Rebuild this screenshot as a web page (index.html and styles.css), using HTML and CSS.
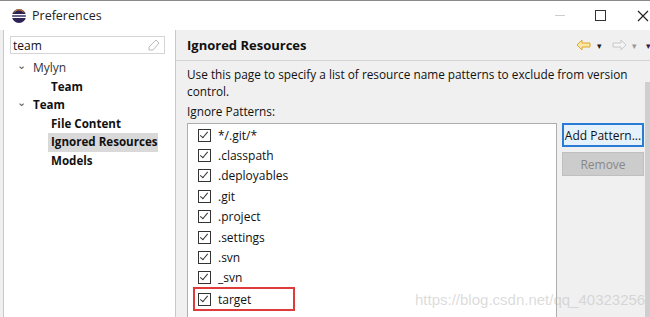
FILE: index.html
```html
<!DOCTYPE html>
<html lang="en">
<head>
  <meta charset="UTF-8">
  <title>Preferences</title>
  <link rel="stylesheet" href="styles.css">
</head>
<body>
  <div class="window">

    <!-- title bar -->
    <div class="titlebar">
      <svg class="app-icon" width="16" height="16" viewBox="0 0 16 16">
        <circle cx="8" cy="8" r="7" fill="#2c2255"/>
        <rect x="1" y="6" width="14" height="1.3" fill="#fff"/>
        <rect x="1" y="8.7" width="14" height="1.3" fill="#fff"/>
        <path d="M3 4.5 A6 6 0 0 1 13 4.5" stroke="#f7941e" stroke-width="1" fill="none"/>
      </svg>
      <span class="title">Preferences</span>
      <div class="win-ctrls">
        <span class="ctrl min"></span>
        <span class="ctrl max"></span>
        <span class="ctrl close">
          <svg width="12" height="12" viewBox="0 0 12 12"><path d="M1 1 L11 11 M11 1 L1 11" stroke="#222" stroke-width="1.2"/></svg>
        </span>
      </div>
    </div>

    <div class="body">
      <!-- left tree -->
      <div class="sidebar">
        <div class="search">
          <span>team</span>
          <svg class="clear" width="12" height="12" viewBox="0 0 12 12"><path d="M8 1 L11 4 L5 11 L1 11 L1 8 Z" fill="none" stroke="#bbb"/></svg>
        </div>
        <ul class="tree">
          <li class="node"><span class="chev">&#8964;</span>Mylyn</li>
          <li class="leaf">Team</li>
          <li class="node bold"><span class="chev">&#8964;</span>Team</li>
          <li class="leaf">File Content</li>
          <li class="leaf selected">Ignored Resources</li>
          <li class="leaf">Models</li>
        </ul>
      </div>

      <!-- right page -->
      <div class="page">
        <div class="page-head">
          <h2>Ignored Resources</h2>
          <div class="nav-arrows">
            <svg width="16" height="12" viewBox="0 0 16 12"><path d="M1 6 L6 1 L6 4 L14 4 L14 8 L6 8 L6 11 Z" fill="#fbe7a3" stroke="#d9a72a"/></svg>
            <span class="drop">&#9662;</span>
            <svg width="16" height="12" viewBox="0 0 16 12"><path d="M15 6 L10 1 L10 4 L2 4 L2 8 L10 8 L10 11 Z" fill="#f4f4f4" stroke="#c8c8c8"/></svg>
            <span class="drop light">&#9662;</span>
            <span class="drop dark">&#9662;</span>
          </div>
        </div>
        <div class="page-body">
          <p class="desc">Use this page to specify a list of resource name patterns to exclude from version control.</p>
          <p class="label">Ignore Patterns:</p>
          <div class="patterns">
            <ul class="list">
              <li><span class="check"></span>*/.git/*</li>
              <li><span class="check"></span>.classpath</li>
              <li><span class="check"></span>.deployables</li>
              <li><span class="check"></span>.git</li>
              <li><span class="check"></span>.project</li>
              <li><span class="check"></span>.settings</li>
              <li><span class="check"></span>.svn</li>
              <li><span class="check"></span>_svn</li>
              <li class="marked"><span class="check"></span>target</li>
            </ul>
            <div class="buttons">
              <button class="btn primary">Add Pattern...</button>
              <button class="btn" disabled>Remove</button>
            </div>
          </div>
        </div>
        <div class="scroll-edge"></div>
      </div>
    </div>

    <div class="watermark">https://blog.csdn.net/qq_40323256</div>
  </div>
</body>
</html>
```

FILE: styles.css
```css
/* base */
html, body {
  margin: 0; padding: 0;
  overflow: hidden;
  font-family: 'Open Sans', 'Noto Sans', sans-serif;
  font-size: 11.8px;
  color: #111;
}
ul { list-style: none; margin: 0; padding: 0; }
p { margin: 0; }

.window {
  position: relative;
  width: 650px; height: 317px;
  border-top: 1px solid #8a8a8a;
  box-sizing: border-box;
  background: #f0f0f0;
  overflow: hidden;
}

/* title bar */
.titlebar {
  height: 29px; background: #fff;
  display: flex; align-items: center;
  padding-left: 11px;
}
.app-icon { margin-right: 5px; }
.title { font-size: 12.5px; color: #222; }
.win-ctrls { margin-left: auto; margin-right: -15px; display: flex; align-items: center; height: 100%; }
.ctrl { width: 41px; height: 100%; display: flex; align-items: center; justify-content: center; }
.ctrl.min::before { content: ""; width: 10px; height: 1px; background: #ccc; }
.ctrl.max::before { content: ""; width: 9px; height: 9px; border: 1px solid #333; }
.ctrl.close { width: 44px; }

/* body */
.body { display: flex; height: calc(100% - 29px); }

.sidebar {
  width: 173px; margin-left: 3px;
  background: #fff;
  border-left: 1px solid #c8c8c8;
  border-right: 1px solid #c8c8c8;
  padding: 6px 0 0 6px;
  box-sizing: border-box;
}
.search {
  width: 155px; height: 18px;
  border: 1px solid #d5d5d5;
  display: flex; align-items: center;
  padding: 0 4px 0 2px; box-sizing: border-box;
  font-size: 12px;
}
.clear { margin-left: auto; }
.tree { margin-top: 5px; }
.tree li { height: 18.6px; line-height: 18.6px; white-space: nowrap; font-size: 12px; }
.tree .node { padding-left: 7px; color: #333; }
.tree .node.bold { font-weight: bold; color: #111; font-size: 11.6px; }
.tree .chev {
  display: inline-block; width: 16px;
  font-size: 11px; color: #555; font-weight: normal;
  transform: translateY(-3px);
}
.tree .leaf { padding-left: 41px; font-weight: bold; font-size: 11.6px; }
.tree .leaf.selected {
  margin-left: 38px; padding-left: 3px;
  width: 107px; background: #d9d9d9;
}

/* right page */
.page { position: relative; flex: 1; }
.page-head {
  height: 30px;
  display: flex; align-items: center;
  padding-left: 11px;
  border-bottom: 1px solid #d4d4d4;
}
.page-head h2 { margin: 0; font-size: 13px; font-weight: bold; }
.nav-arrows { margin-left: auto; display: flex; align-items: center; gap: 5px; margin-right: -1px; }
.drop { font-size: 9px; color: #222; margin-right: 4px; }
.drop.light { color: #999; }
.drop.dark { color: #2c2255; margin-right: 0; }

.page-body { padding: 5px 0 0 11px; }
.desc { width: 455px; line-height: 17px; }
.label { margin-top: 3px; line-height: 17px; }

.patterns { display: flex; margin-top: 3px; }
.list {
  width: 370px; height: 200px;
  background: #fff;
  border: 1px solid #adadad;
  padding: 1px 0 0 6px;
  box-sizing: border-box;
}
.list li { height: 20.4px; display: flex; align-items: center; font-size: 12px; }
.check {
  width: 11px; height: 11px;
  border: 1px solid #333;
  margin: 0 7px 0 4px;
  position: relative;
}
.check::after {
  content: ""; position: absolute;
  left: 3px; top: 0px; width: 3px; height: 7px;
  border: solid #333; border-width: 0 1.3px 1.3px 0;
  transform: rotate(40deg);
}
.list li.marked {
  outline: 2px solid #e03b3b;
  width: 98px; margin-left: 1px; padding-left: 0;
  height: 20px; margin-top: 1px;
}
.list li.marked .check { margin-left: 3px; }

.buttons { display: flex; flex-direction: column; gap: 5px; margin-left: 5px; }
.btn {
  width: 82px; height: 24px;
  font-family: inherit; font-size: 12px;
  background: #e1e1e1; border: 1px solid #adadad;
  padding: 0; color: #111;
}
.btn.primary { border: 2px solid #2a7bd4; background: #e5f1fb; }
.btn:disabled { background: #cccccc; border-color: #bfbfbf; color: #888; }

.scroll-edge {
  position: absolute; right: 0; top: 52px; bottom: 0;
  width: 5px; background: #cfcfcf;
}

.watermark {
  position: absolute; left: 415px; top: 290px;
  font-family: 'Liberation Sans', Arial, sans-serif;
  font-size: 15px; color: rgba(190,190,190,0.55);
  pointer-events: none;
}
```
